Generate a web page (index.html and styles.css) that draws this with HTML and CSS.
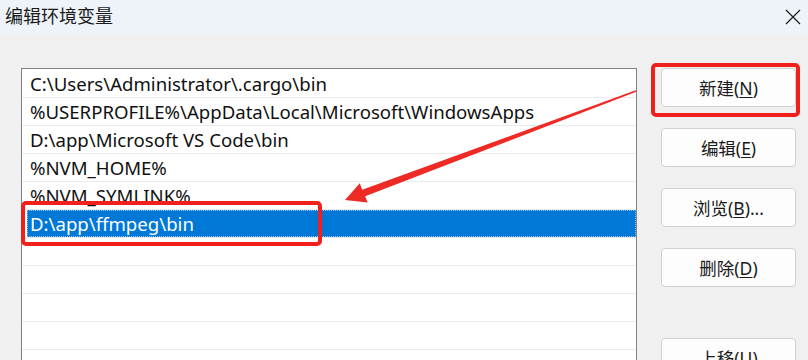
FILE: index.html
```html
<!DOCTYPE html>
<html lang="zh-CN">
<head>
<meta charset="utf-8">
<title>编辑环境变量</title>
<link rel="stylesheet" href="styles.css">
</head>
<body>
<div class="window">
  <div class="titlebar">
    <span class="title">编辑环境变量</span>
    <svg class="close" width="16" height="16" viewBox="0 0 16 16"><path d="M1 1L15 15M15 1L1 15" stroke="#1a1a1a" stroke-width="1.2" fill="none"/></svg>
  </div>
  <div class="content">
    <div class="list">
      <div class="row">C:\Users\Administrator\.cargo\bin</div>
      <div class="row">%USERPROFILE%\AppData\Local\Microsoft\WindowsApps</div>
      <div class="row">D:\app\Microsoft VS Code\bin</div>
      <div class="row">%NVM_HOME%</div>
      <div class="row">%NVM_SYMLINK%</div>
      <div class="row selected"><span class="sel">D:\app\ffmpeg\bin</span></div>
      <div class="row"></div>
      <div class="row"></div>
      <div class="row"></div>
      <div class="row"></div>
    </div>
    <div class="buttons">
      <div class="btn">新建(<u>N</u>)</div>
      <div class="btn">编辑(<u>E</u>)</div>
      <div class="btn">浏览(<u>B</u>)...</div>
      <div class="btn">删除(<u>D</u>)</div>
      <div class="btn btn-gap">上移(<u>U</u>)</div>
    </div>
  </div>
  <div class="mark mark-new"></div>
  <div class="mark mark-row"></div>
  <svg class="arrow" width="808" height="360" viewBox="0 0 808 360">
    <polygon fill="#ee2a24" points="636.3,91.7 635.7,90.2 362.2,189.8 359.8,183.2 345,200 367.6,202.6 365.2,196.2"/>
  </svg>
</div>
</body>
</html>
```

FILE: styles.css
```css
html, body {
  margin: 0;
  padding: 0;
}
body {
  width: 808px;
  height: 360px;
  overflow: hidden;
  background: #f0f0f0;
  font-family: "Noto Sans", "Noto Sans CJK SC", sans-serif;
  color: #000;
}
.window {
  position: relative;
  width: 808px;
  height: 360px;
  overflow: hidden;
}
.titlebar {
  height: 35px;
  background: #eef3f9;
  display: flex;
  align-items: center;
  justify-content: space-between;
  padding: 0 7px 5px 5px;
  box-sizing: border-box;
}
.title {
  font-family: "Noto Sans CJK SC", sans-serif;
  font-size: 18px;
  color: #1a1a1a;
}
.close {
  display: block;
  margin-top: 3px;
}
.content {
  display: flex;
  gap: 24px;
  padding: 33px 0 0 21px;
}
.list {
  width: 616px;
  height: 320px;
  box-sizing: border-box;
  border: 1px solid #828282;
  background: #fff;
  padding-top: 1px;
}
.row {
  height: 28px;
  box-sizing: border-box;
  border-bottom: 1px solid #ebebeb;
  padding-left: 8px;
  font-size: 18.6px;
  line-height: 28px;
  white-space: nowrap;
  color: #111;
}
.row.selected {
  padding: 0 0 0 5px;
}
.sel {
  display: block;
  height: 27px;
  line-height: 27px;
  background: #0078d7;
  color: #fff;
  padding-left: 3px;
  box-sizing: border-box;
  outline: 1px dotted #8fc3ee;
  outline-offset: -1px;
}
.buttons {
  display: flex;
  flex-direction: column;
  gap: 21px;
  width: 135px;
}
.btn {
  height: 39px;
  box-sizing: border-box;
  border: 1px solid #d1d1d1;
  border-radius: 4px;
  background: #fdfdfd;
  display: flex;
  align-items: center;
  justify-content: center;
  font-size: 17.5px;
  color: #1a1a1a;
}
.btn u {
  text-decoration-thickness: 1px;
  text-underline-offset: 2px;
}
.btn-gap {
  margin-top: 30px;
}
.mark {
  position: absolute;
  border: 4px solid #f0201c;
  border-radius: 5px;
  box-sizing: border-box;
}
.mark-new {
  left: 651px;
  top: 63px;
  width: 149px;
  height: 54px;
}
.mark-row {
  left: 21px;
  top: 201px;
  width: 301px;
  height: 45px;
}
.arrow {
  position: absolute;
  left: 0;
  top: 0;
}
```
